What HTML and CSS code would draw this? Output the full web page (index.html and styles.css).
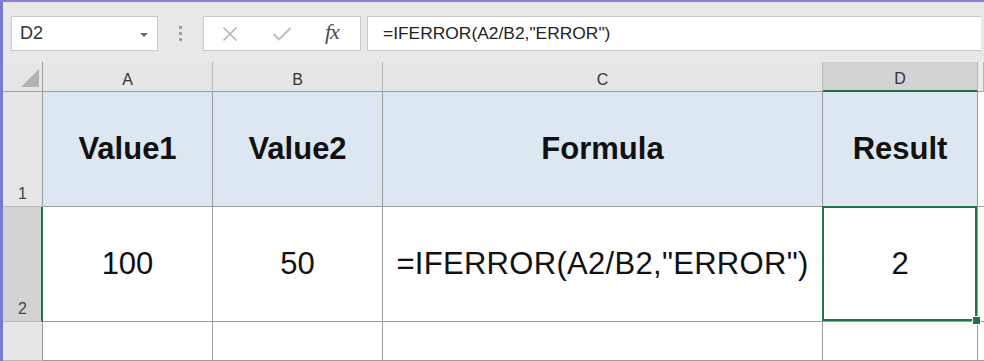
FILE: index.html
```html
<!DOCTYPE html>
<html lang="en">
<head>
  <meta charset="UTF-8" />
  <title>IFERROR example</title>
  <link rel="stylesheet" href="styles.css">
</head>
<body>

  <div class="window">
    <div class="formula-bar">
      <div class="name-box">
        <span>D2</span>
        <span class="drop-arrow"></span>
      </div>
      <div class="grip"><i></i><i></i><i></i></div>
      <div class="fx-box">
        <svg class="icon-x" width="16" height="16" viewBox="0 0 16 16">
          <path d="M1.5 1.5 L14.5 14.5 M14.5 1.5 L1.5 14.5" stroke="#b4b4b4" stroke-width="1.6" fill="none"/>
        </svg>
        <svg class="icon-check" width="20" height="16" viewBox="0 0 20 16">
          <path d="M1.5 8 L7 13.5 L18.5 2" stroke="#bcbcbc" stroke-width="1.8" fill="none"/>
        </svg>
        <span class="fx">fx</span>
      </div>
      <div class="formula-input">=IFERROR(A2/B2,"ERROR")</div>
    </div>

    <div class="sheet">
      <div class="corner"><span class="corner-mark"></span></div>
      <div class="col-head">A</div>
      <div class="col-head">B</div>
      <div class="col-head">C</div>
      <div class="col-head active">D</div>
      <div class="col-head edge"></div>

      <div class="row-head">1</div>
      <div class="cell title">Value1</div>
      <div class="cell title">Value2</div>
      <div class="cell title">Formula</div>
      <div class="cell title">Result</div>
      <div class="cell edge"></div>

      <div class="row-head active">2</div>
      <div class="cell">100</div>
      <div class="cell">50</div>
      <div class="cell wide">=IFERROR(A2/B2,"ERROR")</div>
      <div class="cell selected">2</div>
      <div class="cell edge"></div>

      <div class="row-head"></div>
      <div class="cell"></div>
      <div class="cell"></div>
      <div class="cell"></div>
      <div class="cell"></div>
      <div class="cell edge"></div>
    </div>
  </div>

</body>
</html>
```

FILE: styles.css
```css
* {
  box-sizing: border-box;
}

body {
  margin: 0;
  font-family: 'Liberation Sans', Arial, sans-serif;
  background-color: #fff;
  overflow: hidden;
}

.window {
  width: 984px;
  height: 361px;
  border-top: 2px solid #8484d2;
  border-left: 3px solid #7a7acc;
  background-color: #e8e8e8;
}

/* formula bar */

.formula-bar {
  display: flex;
  align-items: flex-start;
  height: 60px;
  padding: 14px 0 0 8px;
}

.name-box {
  width: 147px;
  height: 35px;
  background-color: #fff;
  border: 1px solid #c8c8c8;
  display: flex;
  align-items: center;
  justify-content: space-between;
  padding: 0 9px 0 8px;
  font-size: 18px;
  color: #333;
}

.drop-arrow {
  width: 0;
  height: 0;
  border-left: 4px solid transparent;
  border-right: 4px solid transparent;
  border-top: 4px solid #6a6a6a;
  margin-top: 2px;
}

.grip {
  width: 45px;
  height: 35px;
  display: flex;
  flex-direction: column;
  align-items: center;
  justify-content: center;
  gap: 3px;
}

.grip i {
  display: block;
  width: 3px;
  height: 3px;
  background-color: #a0a0a0;
}

.fx-box {
  width: 158px;
  height: 35px;
  background-color: #fff;
  border: 1px solid #c8c8c8;
  display: flex;
  align-items: center;
  padding-left: 18px;
}

.icon-x {
  margin-right: 34px;
}

.icon-check {
  margin-right: 33px;
}

.fx {
  font-family: 'Liberation Serif', 'Times New Roman', serif;
  font-style: italic;
  font-size: 22px;
  color: #4a4a4a;
  letter-spacing: -1px;
  margin-top: -3px;
}

.formula-input {
  flex: 1;
  height: 35px;
  margin-left: 6px;
  margin-right: 3px;
  background-color: #fff;
  border: 1px solid #c8c8c8;
  border-right: none;
  padding-left: 15px;
  display: flex;
  align-items: center;
  font-size: 17.4px;
  color: #222;
}

/* grid */

.sheet {
  display: grid;
  grid-template-columns: 40px 170px 170px 440px 155px 1fr;
  grid-template-rows: 30px 115px 115px 39px;
  background-color: #fff;
}

.corner,
.col-head {
  background-color: #e6e6e6;
  border-bottom: 1px solid #9c9c9c;
  border-right: 1px solid #b8b8b8;
}

.corner {
  border-right: 1px solid #9c9c9c;
  display: flex;
  align-items: flex-end;
  justify-content: flex-end;
  padding: 0 3px 4px 0;
}

.corner-mark {
  width: 0;
  height: 0;
  border-left: 18px solid transparent;
  border-bottom: 18px solid #b4b4b4;
}

.col-head {
  display: flex;
  align-items: center;
  justify-content: center;
  font-size: 16px;
  color: #333;
  padding-top: 6px;
}

.col-head.active {
  background-color: #d3d3d3;
  border-bottom: 2px solid #217346;
}

.col-head.edge {
  background-color: #ececec;
}

.row-head {
  background-color: #e6e6e6;
  border-right: 1px solid #9c9c9c;
  border-bottom: 1px solid #b8b8b8;
  display: flex;
  align-items: flex-end;
  padding: 0 0 3px 15px;
  font-size: 16px;
  color: #444;
}

.row-head.active {
  background-color: #d3d3d3;
  border-right: 2px solid #217346;
}

.cell {
  border-right: 1px solid #9c9c9c;
  border-bottom: 1px solid #9c9c9c;
  display: flex;
  align-items: center;
  justify-content: center;
  font-size: 31px;
  color: #111;
}

.cell.wide {
  letter-spacing: 0.3px;
}

.cell.title {
  background-color: #dde7f2;
  font-weight: bold;
}

.cell.edge {
  border-right: none;
}

.cell.selected {
  position: relative;
}

.cell.selected::after {
  content: "";
  position: absolute;
  top: -1px;
  left: -1px;
  right: 0;
  bottom: 0;
  border: 2px solid #217346;
}

.cell.selected::before {
  content: "";
  position: absolute;
  right: -4px;
  bottom: -4px;
  width: 7px;
  height: 7px;
  background-color: #217346;
  border: 1px solid #fff;
  z-index: 1;
}
```
